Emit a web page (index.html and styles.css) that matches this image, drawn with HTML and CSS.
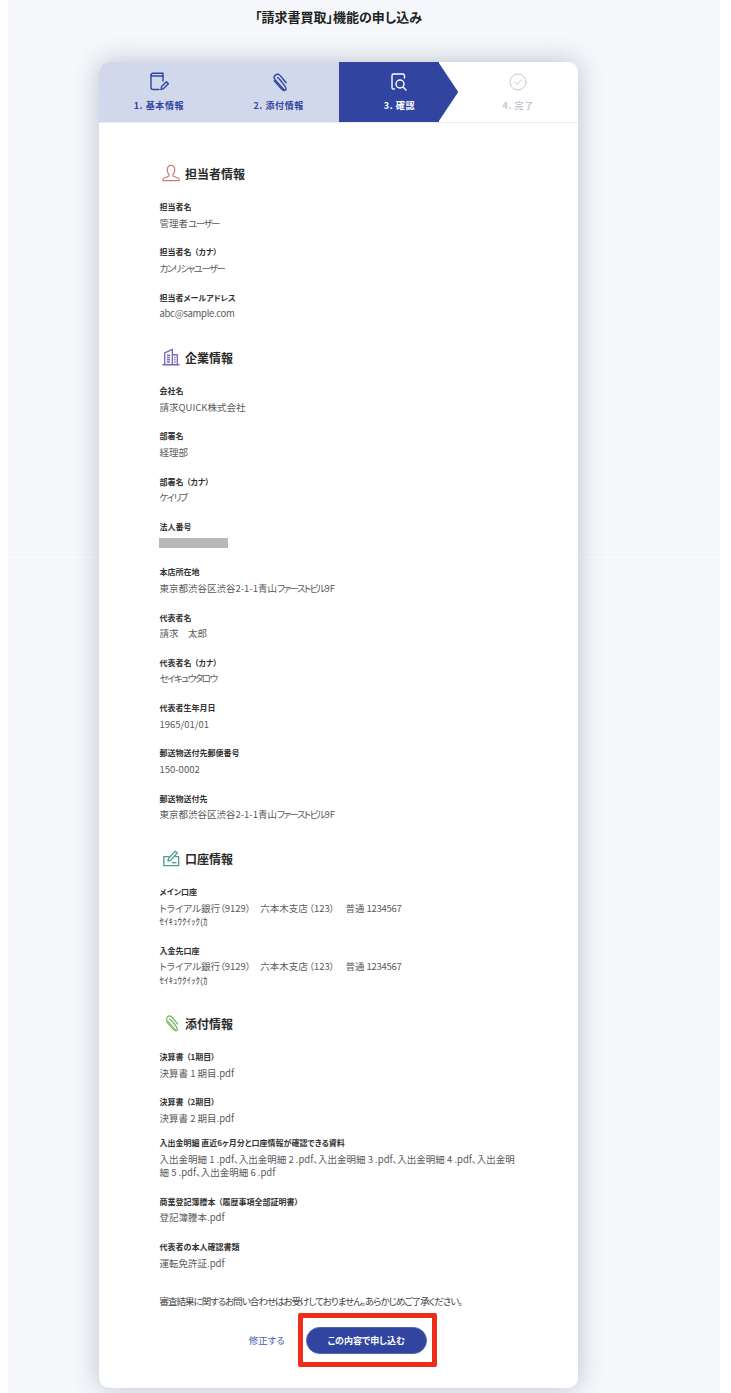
FILE: index.html
```html
<!DOCTYPE html>
<html lang="ja">
  <head>
    <meta charset="UTF-8" />
    <title>「請求書買取」機能の申し込み</title>
    <link rel="stylesheet" href="styles.css">
  </head>
  <body>
    <div class="page">
      <div class="seam"></div>
      <h1 class="title">「請求書買取」機能の申し込み</h1>
      <div class="card">
        <div class="steps">
          <div class="step">
            <svg class="step-icon" viewBox="0 0 20 20" fill="none" stroke="currentColor" stroke-width="1.4" stroke-linecap="round" stroke-linejoin="round">
              <path d="M2 3.2V15.5C2 16.6 2.8 17.5 4 17.5H10" />
              <path d="M2 3.2C2 2 2.8 1.2 4 1.2H14V9" />
              <path d="M2 4H14" />
              <path d="M12 17.6L12.6 14.6L17.4 9.8L19.4 11.8L14.6 16.6Z" />
            </svg>
            <span>1. 基本情報</span>
          </div>
          <div class="step">
            <svg class="step-icon" viewBox="0 0 20 20" fill="none" stroke="currentColor" stroke-width="1.4" stroke-linecap="round" stroke-linejoin="round">
              <path d="M15.5 18.2L6 7.6C4.8 6.2 5 4.2 6.4 3C7.8 1.8 9.8 2 11 3.4L17.2 10.8" />
              <path d="M8.6 5.6C9.4 6 14 11.4 15.6 13.6C17 15.6 17.6 17 16.6 18C15.4 19 13.8 18.4 12.4 16.8L5.2 8.8" />
            </svg>
            <span>2. 添付情報</span>
          </div>
          <div class="step active">
            <svg class="step-icon" viewBox="0 0 20 20" fill="none" stroke="currentColor" stroke-width="1.4" stroke-linecap="round" stroke-linejoin="round">
              <path d="M5.5 17H4.5C3.4 17 3 16.2 3 15.4V3.6C3 2.6 3.6 2 4.6 2H14.4L15.5 3.2V6" />
              <circle cx="11" cy="12" r="4" />
              <path d="M14 15L17 18" />
            </svg>
            <span>3. 確認</span>
          </div>
          <div class="step todo">
            <svg class="step-icon" viewBox="0 0 20 20" fill="none" stroke="currentColor" stroke-width="1" stroke-linecap="round" stroke-linejoin="round">
              <circle cx="10" cy="10" r="8" />
              <path d="M6.8 10.2L9.2 12.4L13.4 7.8" />
            </svg>
            <span>4. 完了</span>
          </div>
        </div>

        <div class="content">
          <h2 class="section-title">
            <svg class="section-icon person" viewBox="0 0 20 20" fill="none" stroke="currentColor" stroke-width="1.3" stroke-linejoin="round">
              <path d="M10 1.5C7.4 1.5 5.8 3.6 5.8 6.4C5.8 8.8 6.8 10.6 7.8 11.6V13.4L1.8 15.8C1 16.2 .8 17 .8 18.4H19.2C19.2 17 19 16.2 18.2 15.8L12.2 13.4V11.6C13.2 10.6 14.2 8.8 14.2 6.4C14.2 3.6 12.6 1.5 10 1.5Z" />
            </svg>
            担当者情報
          </h2>
          <div class="item">
            <div class="label">担当者名</div>
            <div class="value">管理者<span class="narrow">ユーザー</span></div>
          </div>
          <div class="item">
            <div class="label">担当者名<span class="paren">（カナ）</span></div>
            <div class="value"><span class="narrow">カンリシャユーザー</span></div>
          </div>
          <div class="item">
            <div class="label">担当者メールアドレス</div>
            <div class="value mail">abc@sample.com</div>
          </div>

          <h2 class="section-title">
            <svg class="section-icon building" viewBox="0 0 20 20" fill="none" stroke="currentColor" stroke-width="1.5" stroke-linejoin="round">
              <path d="M.5 18.6H19.5" stroke-width="1.8" />
              <path d="M3 18.6V5.5L11.5 1.5V18.6" />
              <path d="M11.5 7.5H17V18.6" />
              <path d="M5.5 8H9M5.5 10.5H9M5.5 13H9M5.5 15.5H9" />
              <path d="M13.5 10.5H15M13.5 13H15M13.5 15.5H15" />
            </svg>
            企業情報
          </h2>
          <div class="item">
            <div class="label">会社名</div>
            <div class="value">請求QUICK株式会社</div>
          </div>
          <div class="item">
            <div class="label">部署名</div>
            <div class="value">経理部</div>
          </div>
          <div class="item">
            <div class="label">部署名<span class="paren">（カナ）</span></div>
            <div class="value"><span class="narrow">ケイリブ</span></div>
          </div>
          <div class="item">
            <div class="label">法人番号</div>
            <div class="value"><div class="masked"></div></div>
          </div>
          <div class="item">
            <div class="label">本店所在地</div>
            <div class="value">東京都渋谷区渋谷2-1-1青山<span class="narrow">ファーストビル</span>9F</div>
          </div>
          <div class="item">
            <div class="label">代表者名</div>
            <div class="value">請求　太郎</div>
          </div>
          <div class="item">
            <div class="label">代表者名<span class="paren">（カナ）</span></div>
            <div class="value"><span class="narrow">セイキュウタロウ</span></div>
          </div>
          <div class="item">
            <div class="label">代表者生年月日</div>
            <div class="value">1965/01/01</div>
          </div>
          <div class="item">
            <div class="label">郵送物送付先郵便番号</div>
            <div class="value">150-0002</div>
          </div>
          <div class="item">
            <div class="label">郵送物送付先</div>
            <div class="value">東京都渋谷区渋谷2-1-1青山<span class="narrow">ファーストビル</span>9F</div>
          </div>

          <h2 class="section-title">
            <svg class="section-icon bank" viewBox="0 0 20 20" fill="none" stroke="currentColor" stroke-width="1.5" stroke-linejoin="round">
              <path d="M8 8.5H2V18.5H18.5V8.5H14.5" />
              <path d="M6.5 13.5L7.2 10.6L14.8 2.4L17 4.4L9.4 12.6Z" />
              <path d="M11 15.2H16" />
            </svg>
            口座情報
          </h2>
          <div class="item">
            <div class="label">メイン口座</div>
            <div class="value">トライアル銀行（9129）　六本木支店<span class="bank-paren">（123）</span>　普通 <span class="digits">1234567</span></div>
            <div class="kana">ｾｲｷｭｳｸｲｯｸ(ｶ</div>
          </div>
          <div class="item">
            <div class="label">入金先口座</div>
            <div class="value">トライアル銀行（9129）　六本木支店<span class="bank-paren">（123）</span>　普通 <span class="digits">1234567</span></div>
            <div class="kana">ｾｲｷｭｳｸｲｯｸ(ｶ</div>
          </div>

          <h2 class="section-title">
            <svg class="section-icon clip" viewBox="0 0 20 20" fill="none" stroke="currentColor" stroke-width="1.5" stroke-linecap="round" stroke-linejoin="round">
              <path d="M15.5 18.2L6 7.6C4.8 6.2 5 4.2 6.4 3C7.8 1.8 9.8 2 11 3.4L17.2 10.8" />
              <path d="M8.6 5.6C9.4 6 14 11.4 15.6 13.6C17 15.6 17.6 17 16.6 18C15.4 19 13.8 18.4 12.4 16.8L5.2 8.8" />
            </svg>
            添付情報
          </h2>
          <div class="item">
            <div class="label">決算書<span class="paren">（1期目）</span></div>
            <div class="value">決算書 1 期目.pdf</div>
          </div>
          <div class="item">
            <div class="label">決算書<span class="paren">（2期目）</span></div>
            <div class="value">決算書 2 期目.pdf</div>
          </div>
          <div class="item tight">
            <div class="label">入出金明細 直近6ヶ月分と口座情報が確認できる資料</div>
            <div class="value">入出金明細 1 .pdf、入出金明細 2 .pdf、入出金明細 3 .pdf、入出金明細 4 .pdf、入出金明細 5 .pdf、入出金明細 6 .pdf</div>
          </div>
          <div class="item">
            <div class="label">商業登記簿謄本<span class="paren">（履歴事項全部証明書）</span></div>
            <div class="value">登記簿謄本.pdf</div>
          </div>
          <div class="item">
            <div class="label">代表者の本人確認書類</div>
            <div class="value">運転免許証.pdf</div>
          </div>

          <p class="note">審査結果に関するお問い合わせはお受けしておりません。あらかじめご了承ください。</p>

          <div class="actions">
            <a class="back-link" href="#">修正する</a>
            <div class="highlight">
              <button class="submit" type="button">この内容で申し込む</button>
            </div>
          </div>
        </div>
      </div>
    </div>
  </body>
</html>
```

FILE: styles.css
```css
* {
  box-sizing: border-box;
}
html,
body {
  height: 1393px;
  overflow: hidden;
}
body {
  margin: 0;
  background-color: white;
  color: #333;
  font-family: "Noto Sans CJK JP", "Noto Sans", sans-serif;
  font-feature-settings: "palt";
}
.page {
  position: relative;
  height: 1393px;
  margin: 0 11px 0 8px;
  background-color: #f5f7fb;
  overflow: hidden;
}
.seam {
  position: absolute;
  top: 557px;
  left: 0;
  right: 0;
  height: 1px;
  background-color: rgba(255, 255, 255, 0.75);
}
.title {
  width: 479px;
  height: 62px;
  margin: 0 0 0 91px;
  padding-top: 8px;
  font-size: 13px;
  line-height: 18px;
  font-weight: 700;
  text-align: center;
  color: #222;
}
.card {
  position: relative;
  width: 479px;
  height: 1326px;
  margin-left: 91px;
  background-color: white;
  border-radius: 10px;
  box-shadow: 0 0 26px rgba(60, 70, 100, 0.3);
  overflow: hidden;
}

/* steps */
.steps {
  display: grid;
  grid-template-columns: repeat(4, 1fr);
  height: 61px;
  border-bottom: 1px solid #e8eaf0;
  background-color: white;
}
.step {
  position: relative;
  display: flex;
  flex-direction: column;
  align-items: center;
  padding-top: 10px;
  background-color: #d2d8ec;
  color: #3145a0;
  font-size: 9px;
  line-height: 14px;
  font-weight: 700;
  letter-spacing: 0.6px;
}
.step span {
  margin-top: 7px;
}
.step-icon {
  width: 20px;
  height: 20px;
}
.step.active {
  background-color: #3145a0;
  color: white;
  margin-right: 19px;
  padding-left: 21px;
}
.step.active::after {
  content: "";
  position: absolute;
  top: 0;
  right: -19px;
  width: 20px;
  height: 100%;
  background-color: #3145a0;
  clip-path: polygon(0 0, 100% 50%, 0 100%);
}
.step.todo {
  background-color: white;
  color: #c3c8d5;
}

/* content */
.content {
  padding: 0 60px 0 60.5px;
}
.section-title {
  display: flex;
  align-items: center;
  gap: 5px;
  height: 20px;
  margin: 0 0 16px;
  padding-left: 2.5px;
  font-size: 12px;
  font-weight: 700;
  color: #2b2b2b;
}
.content > .section-title:first-child {
  margin-top: 40px;
}
.item + .section-title {
  margin-top: 23.5px;
}
.section-icon {
  width: 18px;
  height: 18px;
  flex-shrink: 0;
}
.person {
  color: #cb7b77;
}
.building {
  color: #7b69b9;
}
.bank {
  color: #4f9e96;
}
.clip {
  color: #7dbb6c;
}
.item {
  margin-bottom: 11.3px;
}
.item.tight {
  margin-top: -4.5px;
}
.label {
  height: 14px;
  font-size: 8px;
  line-height: 15px;
  font-weight: 700;
  color: #333;
}
.paren {
  padding: 0 3px;
}
.value {
  padding: 3.5px 0;
  font-size: 9.5px;
  line-height: 13px;
  color: #5a5a5a;
}
.tight .value {
  line-height: 13.5px;
  padding-bottom: 3px;
}
.narrow {
  letter-spacing: -1.5px;
}
.mail {
  letter-spacing: -0.3px;
}
.bank-paren {
  padding: 0 1.5px;
}
.digits {
  letter-spacing: -0.3px;
}
.kana {
  height: 15px;
  margin-top: -2px;
  font-size: 9px;
  line-height: 11px;
  color: #444;
}
.masked {
  width: 69px;
  height: 10px;
  margin: 2px 0 1px -1px;
  background-color: #b8b8b8;
}
.note {
  margin: 21px 0 0;
  font-size: 9.5px;
  line-height: 14px;
  letter-spacing: -1px;
  color: #444;
  white-space: nowrap;
}
.actions {
  display: flex;
  align-items: center;
  justify-content: center;
  gap: 13px;
  margin: 5px 0 0 8px;
}
.back-link {
  color: #4a5cb0;
  font-size: 9.5px;
  text-decoration: none;
}
.highlight {
  padding: 9px 5px 8px 3px;
  border: 5px solid #ee2c1a;
  border-radius: 2px;
}
.submit {
  display: block;
  width: 121px;
  height: 27px;
  padding: 0;
  border: 1px solid #5466b6;
  border-radius: 14px;
  background-color: #3145a0;
  color: white;
  font-family: inherit;
  font-feature-settings: "palt";
  font-size: 9px;
  font-weight: 700;
}
```
